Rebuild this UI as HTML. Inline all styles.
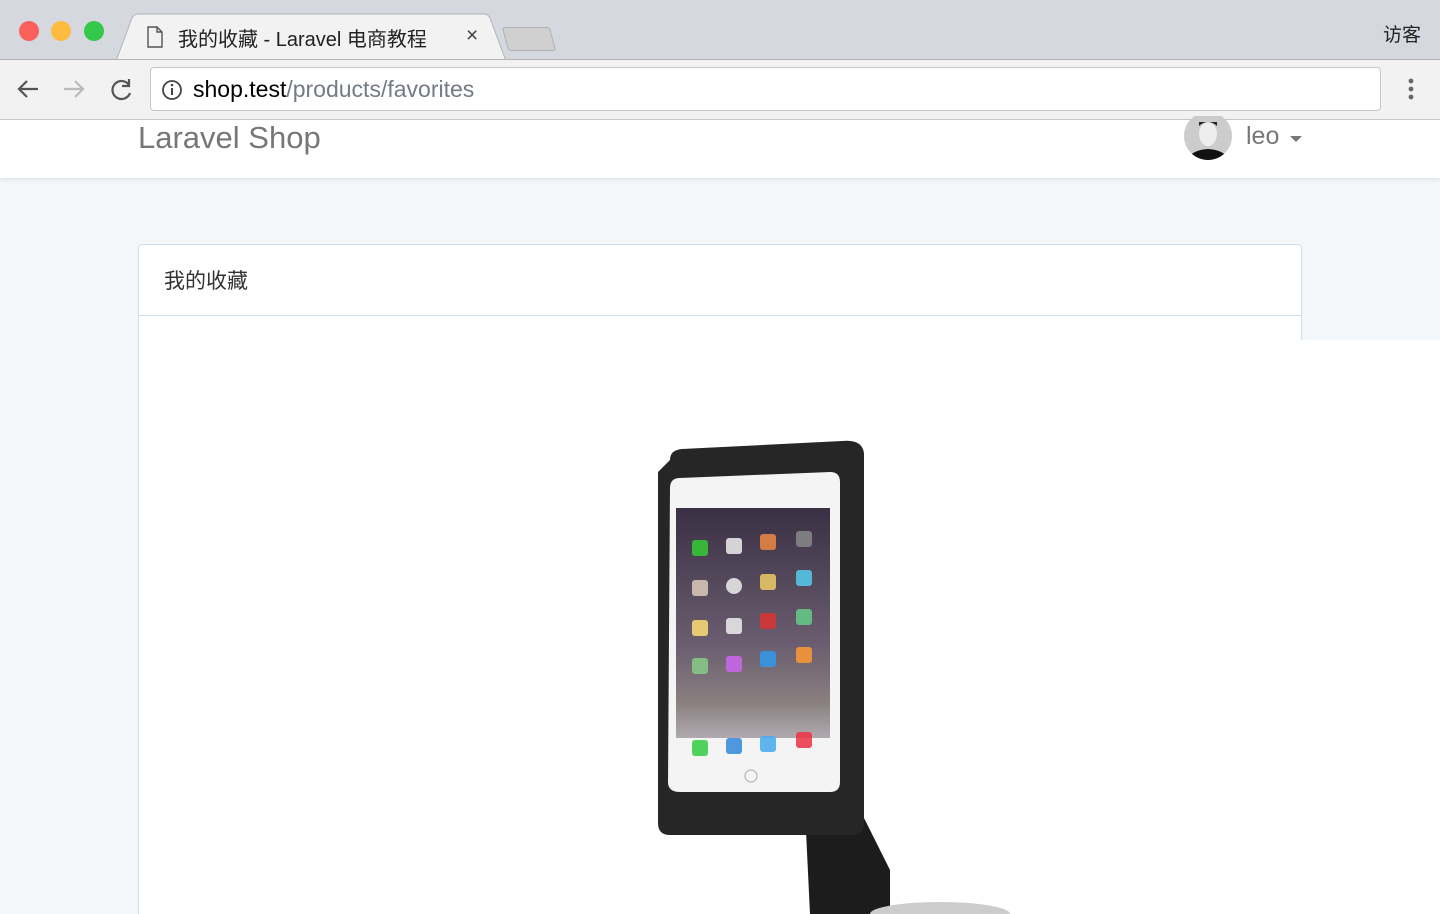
<!DOCTYPE html>
<html><head><meta charset="utf-8"><style>
*{margin:0;padding:0;box-sizing:border-box}
html,body{width:1440px;height:914px;overflow:hidden}
body{background:#f4f7fa;font-family:"Liberation Sans","Noto Sans CJK SC",sans-serif;position:relative}
.tabbar{position:absolute;left:0;top:0;width:1440px;height:60px;background:#d5d9df}
.toolbar{position:absolute;left:0;top:59px;width:1440px;height:61px;background:#f2f2f2;border-top:1px solid #b5b5b5;border-bottom:1px solid #c9c9c9}
.dot{position:absolute;top:21px;width:20px;height:20px;border-radius:50%}
.tab{position:absolute;left:116px;top:14px;width:392px;height:47px;background:#f2f2f2;clip-path:polygon(4% 0,96% 0,100% 100%,0 100%);}
.tabt{position:absolute;left:178px;top:23px;font-size:20px;color:#222}
.url{position:absolute;left:150px;top:67px;width:1231px;height:44px;background:#fff;border:1px solid #c6c6c6;border-radius:4px}
.nav{position:absolute;left:0;top:120px;width:1440px;height:58px;background:#fff;box-shadow:0 2px 4px rgba(0,0,0,.08)}
.card{position:absolute;left:138px;top:244px;width:1164px;height:690px;background:#fff;border:1px solid #d3e0e9;border-radius:4px}
.hd{height:71px;border-bottom:1px solid #d3e0e9;padding:20px 0 0 25px;font-size:21px;color:#333}
.img{position:absolute;left:139px;top:340px;width:1301px;height:574px;background:#fff}
</style></head><body>
<div class="tabbar"></div>
<div class="dot" style="left:19px;background:#fc605b"></div>
<div class="dot" style="left:51px;background:#fdbc40"></div>
<div class="dot" style="left:84px;background:#34c84a"></div>
<svg style="position:absolute;left:114px;top:13px" width="396" height="48"><path d="M2 48L18 5q2-4 6-4h346q4 0 6 4l16 43" fill="#f2f2f2" stroke="#b0b3b8"/></svg>
<svg style="position:absolute;left:146px;top:26px" width="18" height="22"><path d="M2 1h9l5 5v15H2z M11 1v5h5" fill="none" stroke="#555" stroke-width="1.4"/></svg>
<div class="tabt">我的收藏 - Laravel 电商教程</div>
<div style="position:absolute;left:466px;top:24px;font-size:21px;color:#444">×</div>
<div style="position:absolute;left:505px;top:27px;width:48px;height:24px;background:#d0d0d0;border:1px solid #b0b0b0;border-radius:3px;transform:skewX(15deg)"></div>
<div style="position:absolute;left:1383px;top:20px;font-size:19px;color:#222">访客</div>
<div class="toolbar"></div>
<svg style="position:absolute;left:16px;top:77px" width="120" height="24" fill="none" stroke-width="2.2">
<path d="M22 12H4M11 4l-8 8 8 8" stroke="#555"/>
<path d="M48 12h18M59 4l8 8-8 8" stroke="#bbb"/>
<path d="M113 8a9 9 0 1 0 1 8M113 2v7h-7" stroke="#555"/>
</svg>
<div class="url"></div>
<svg style="position:absolute;left:161px;top:79px" width="22" height="22"><circle cx="11" cy="11" r="9" fill="none" stroke="#444" stroke-width="1.8"/><path d="M11 9v7" stroke="#444" stroke-width="2"/><circle cx="11" cy="6" r="1.3" fill="#444"/></svg>
<div style="position:absolute;left:193px;top:76px;font-size:23px;color:#000">shop.test<span style="color:#747b85">/products/favorites</span></div>
<svg style="position:absolute;left:1405px;top:78px" width="12" height="24"><circle cx="6" cy="3" r="2.4" fill="#666"/><circle cx="6" cy="11" r="2.4" fill="#666"/><circle cx="6" cy="19" r="2.4" fill="#666"/></svg>
<div class="nav"></div>
<div style="position:absolute;left:138px;top:120px;font-size:31px;color:#777">Laravel Shop</div>
<svg style="position:absolute;left:1184px;top:116px" width="50" height="46"><defs><clipPath id="c"><circle cx="24" cy="20" r="24"/></clipPath></defs><circle cx="24" cy="20" r="24" fill="#ccc"/><g clip-path="url(#c)"><path d="M2 46q4-12 22-13q18 1 22 13z" fill="#111"/><ellipse cx="24" cy="18" rx="9" ry="12" fill="#eee"/><path d="M15 10q9-8 18 0v-4h-18z" fill="#222"/></g></svg>
<div style="position:absolute;left:1246px;top:122px;font-size:25px;color:#777">leo</div>
<div style="position:absolute;left:1290px;top:136px;border:6px solid transparent;border-top-color:#777"></div>
<div class="card"><div class="hd">我的收藏</div></div>
<div class="img"></div>
<svg style="position:absolute;left:640px;top:430px" width="380" height="484">
<defs><linearGradient id="s" x1="0" y1="0" x2="0" y2="1"><stop offset="0" stop-color="#3a2f44"/><stop offset=".6" stop-color="#6b5e70"/><stop offset=".85" stop-color="#8a8080"/><stop offset="1" stop-color="#b0aab0"/></linearGradient></defs>
<path d="M165 380h55l30 60v44h-80z" fill="#1c1c1c"/>
<ellipse cx="300" cy="484" rx="70" ry="12" fill="#ccc"/>
<path d="M30 30q0-10 12-11l160-8q20-2 22 12v370q0 12-12 12H30q-12 0-12-12V42z" fill="#262626"/>
<path d="M30 58q0-10 10-10l150-6q10 0 10 10v300q0 10-10 10H40q-12 0-12-10z" fill="#f4f4f4"/>
<rect x="36" y="78" width="154" height="230" fill="url(#s)"/>
<g opacity=".85">
<rect x="52" y="110" width="16" height="16" rx="3" fill="#3c3"/><rect x="86" y="108" width="16" height="16" rx="3" fill="#eee"/><rect x="120" y="104" width="16" height="16" rx="3" fill="#e84"/><rect x="156" y="101" width="16" height="16" rx="3" fill="#888"/>
<rect x="52" y="150" width="16" height="16" rx="3" fill="#dcb"/><rect x="86" y="148" width="16" height="16" rx="8" fill="#eee"/><rect x="120" y="144" width="16" height="16" rx="3" fill="#ec6"/><rect x="156" y="140" width="16" height="16" rx="3" fill="#5ce"/>
<rect x="52" y="190" width="16" height="16" rx="3" fill="#fd7"/><rect x="86" y="188" width="16" height="16" rx="3" fill="#eee"/><rect x="120" y="183" width="16" height="16" rx="3" fill="#d33"/><rect x="156" y="179" width="16" height="16" rx="3" fill="#6c8"/>
<rect x="52" y="228" width="16" height="16" rx="3" fill="#8c8"/><rect x="86" y="226" width="16" height="16" rx="3" fill="#c6e"/><rect x="120" y="221" width="16" height="16" rx="3" fill="#39e"/><rect x="156" y="217" width="16" height="16" rx="3" fill="#f93"/>
<rect x="52" y="310" width="16" height="16" rx="3" fill="#3c4"/><rect x="86" y="308" width="16" height="16" rx="3" fill="#38d"/><rect x="120" y="306" width="16" height="16" rx="3" fill="#4ae"/><rect x="156" y="302" width="16" height="16" rx="3" fill="#e34"/>
</g>
<circle cx="111" cy="346" r="6" fill="none" stroke="#aaa"/>
</svg>
</body></html>
